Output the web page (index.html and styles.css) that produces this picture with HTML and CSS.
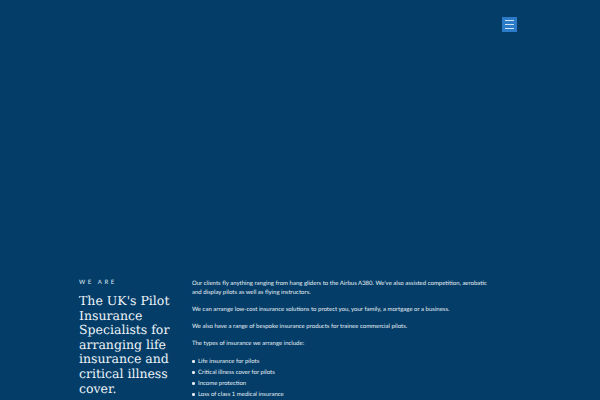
FILE: index.html
```html
<!DOCTYPE html>
<html>
<head>
<meta charset="utf-8">
<link rel="stylesheet" href="styles.css">
</head>
<body>
<header class="top">
  <button class="menu" aria-label="Menu">
    <span></span><span></span><span></span>
  </button>
</header>
<section class="intro">
  <div class="left">
    <div class="eyebrow">WE ARE</div>
    <h1>The UK's Pilot Insurance Specialists for arranging life insurance and critical illness cover.</h1>
  </div>
  <div class="right">
    <p>Our clients fly anything ranging from hang gliders to the Airbus A380. We've also assisted competition, aerobatic and display pilots as well as flying instructors.</p>
    <p>We can arrange low-cost insurance solutions to protect you, your family, a mortgage or a business.</p>
    <p>We also have a range of bespoke insurance products for trainee commercial pilots.</p>
    <p>The types of insurance we arrange include:</p>
    <ul>
      <li>Life insurance for pilots</li>
      <li>Critical illness cover for pilots</li>
      <li>Income protection</li>
      <li>Loss of class 1 medical insurance</li>
    </ul>
  </div>
</section>
</body>
</html>
```
FILE: styles.css
```css
html, body {
  margin: 0;
  padding: 0;
  background: #033d68;
  overflow: hidden;
}
body {
  width: 600px;
  height: 400px;
  font-family: Lato, "Liberation Sans", sans-serif;
  color: #e6edf3;
  text-rendering: geometricPrecision;
}
.top {
  height: 278px;
  display: flex;
  justify-content: flex-end;
  align-items: flex-start;
  padding-right: 83px;
  box-sizing: border-box;
}
.menu {
  margin-top: 17px;
  width: 15px;
  height: 15px;
  background: #2b7bc9;
  border: none;
  padding: 3px 3px;
  display: flex;
  flex-direction: column;
  justify-content: space-between;
  box-sizing: border-box;
}
.menu span {
  display: block;
  height: 1px;
  background: #cfe3f5;
}
.intro {
  display: flex;
  padding-left: 79px;
  gap: 13px;
}
.left {
  width: 100px;
}
.eyebrow {
  font-size: 6px;
  letter-spacing: 2.6px;
  margin-top: 1px;
  color: #dfe8f0;
}
h1 {
  font-family: "DejaVu Serif", serif;
  font-weight: normal;
  font-size: 12.5px;
  line-height: 14.6px;
  margin: 8px 0 0 0;
  color: #eef3f7;
}
.right {
  width: 302px;
  font-size: 6px;
  line-height: 9.3px;
  padding-top: 1px;
}
.right p {
  margin: 0 0 7.7px 0;
}
.right ul {
  margin: 0;
  padding-left: 6px;
  list-style: none;
}
.right li {
  position: relative;
  line-height: 11px;
}
.right li::before {
  content: "";
  position: absolute;
  left: -6px;
  top: 4px;
  width: 2.5px;
  height: 2.5px;
  border-radius: 50%;
  background: #e6edf3;
}
```
